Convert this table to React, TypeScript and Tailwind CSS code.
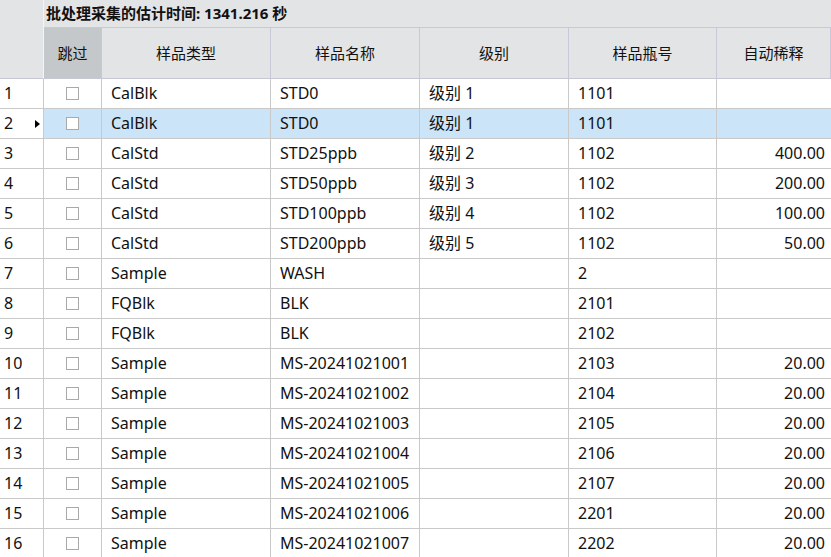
const rows = [
  ["1", "CalBlk", "STD0", "级别 1", "1101", ""],
  ["2", "CalBlk", "STD0", "级别 1", "1101", ""],
  ["3", "CalStd", "STD25ppb", "级别 2", "1102", "400.00"],
  ["4", "CalStd", "STD50ppb", "级别 3", "1102", "200.00"],
  ["5", "CalStd", "STD100ppb", "级别 4", "1102", "100.00"],
  ["6", "CalStd", "STD200ppb", "级别 5", "1102", "50.00"],
  ["7", "Sample", "WASH", "", "2", ""],
  ["8", "FQBlk", "BLK", "", "2101", ""],
  ["9", "FQBlk", "BLK", "", "2102", ""],
  ["10", "Sample", "MS-20241021001", "", "2103", "20.00"],
  ["11", "Sample", "MS-20241021002", "", "2104", "20.00"],
  ["12", "Sample", "MS-20241021003", "", "2105", "20.00"],
  ["13", "Sample", "MS-20241021004", "", "2106", "20.00"],
  ["14", "Sample", "MS-20241021005", "", "2107", "20.00"],
  ["15", "Sample", "MS-20241021006", "", "2201", "20.00"],
  ["16", "Sample", "MS-20241021007", "", "2202", "20.00"],
]

const cols = "grid grid-cols-[44px_58px_169px_149px_149px_148px_1fr]"

export default function App() {
  return (
    <div className="w-[831px] h-[557px] overflow-hidden bg-white text-[16px] text-[#111] font-['Noto_Sans','Noto_Sans_CJK_SC',sans-serif]">
      {/* header block */}
      <div className="flex h-[79px] bg-[#e3e4e6]">
        <div className="w-[44px] border-r border-[#f4f4f6] border-b border-b-[#c8c8d4]" />
        <div className="flex-1 flex flex-col">
          <div className="h-[28px] flex items-center pl-[2px] font-bold text-[15px] border-b border-[#c8c8d8]">
            批处理采集的估计时间: 1341.216 秒
          </div>
          <div className="flex-1 grid grid-cols-[58px_169px_149px_149px_148px_1fr] border-b border-[#c8c8d4]">
            {["跳过", "样品类型", "样品名称", "级别", "样品瓶号", "自动稀释"].map((h, i) => (
              <div
                key={h}
                className={`flex items-center justify-center text-[15px] border-r border-[#c8c8d8] ${i === 0 ? "bg-[#c5c8cb]" : ""}`}
              >
                {h}
              </div>
            ))}
          </div>
        </div>
      </div>

      {/* data rows */}
      {rows.map((r, idx) => {
        const selected = idx === 1
        return (
          <div key={r[0]} className={`${cols} h-[30px] border-b border-[#c9c9c9]`}>
            <div className="relative flex items-center pl-[4px] pb-[2px] bg-white border-r border-[#c9c9c9]">
              {r[0]}
              {selected && (
                <svg className="absolute right-[3px] top-[11px]" width="5" height="8" viewBox="0 0 5 8">
                  <path d="M0 0 L5 4 L0 8 Z" fill="#000" />
                </svg>
              )}
            </div>
            <div className={`flex items-center justify-center border-r border-[#c9c9c9] ${selected ? "bg-[#cce4f7]" : ""}`}>
              <div className="w-[13px] h-[13px] border border-[#a9a9a9] bg-white" />
            </div>
            {r.slice(1).map((c, j) => (
              <div
                key={j}
                className={`flex items-center pb-[2px] border-r border-[#c9c9c9] ${j === 4 ? "justify-end pr-[6px] border-r-0" : "pl-[9px]"} ${selected ? "bg-[#cce4f7]" : ""}`}
              >
                {c}
              </div>
            ))}
          </div>
        )
      })}
    </div>
  )
}
